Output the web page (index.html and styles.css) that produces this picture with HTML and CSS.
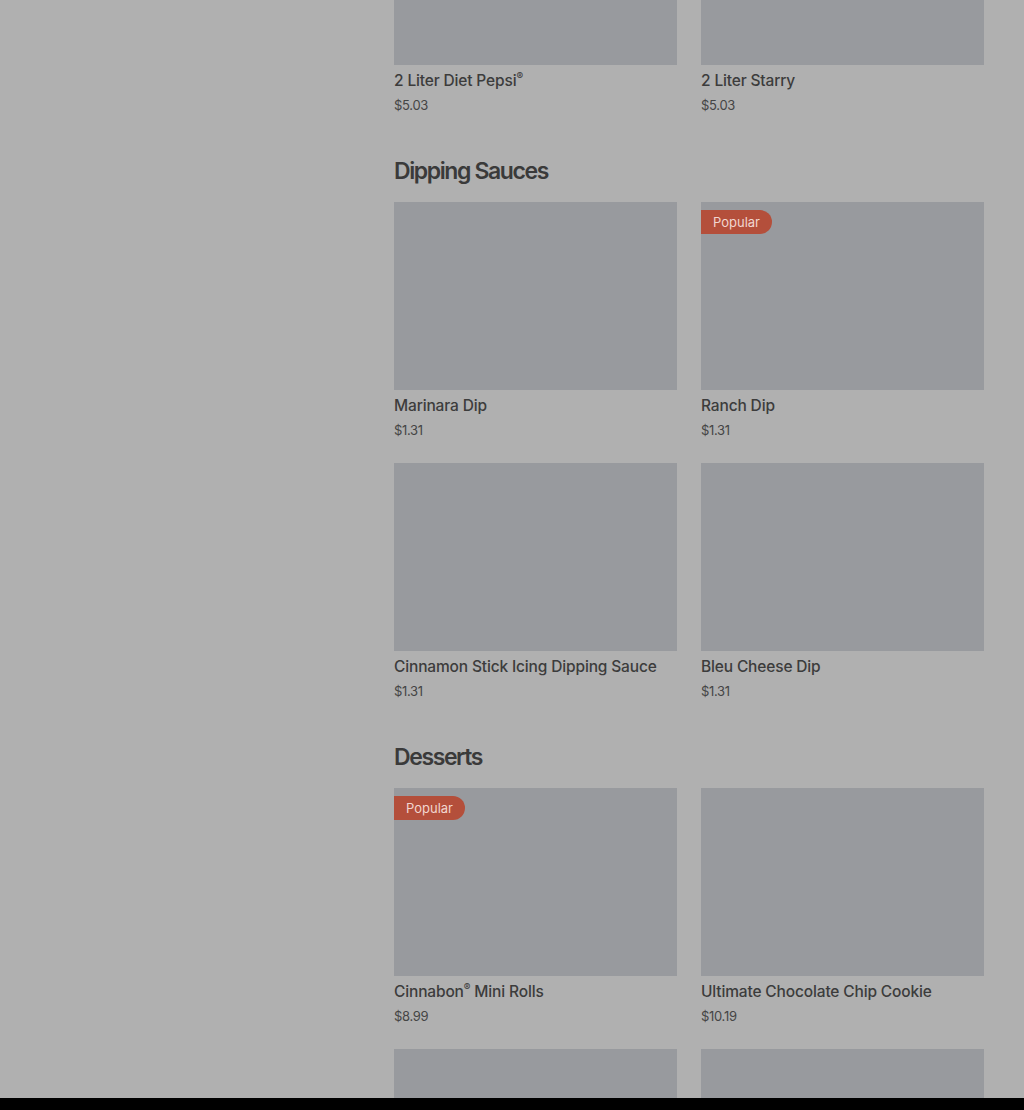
FILE: index.html
```html
<!DOCTYPE html>
<html>
<head>
    <meta charset="UTF-8"/>
    <title>Menu</title>
    <link rel="stylesheet" href="styles.css">
</head>
<body>
<div class="page">
    <div class="menu">
        <div class="grid">
            <div class="card">
                <div class="photo"></div>
                <div class="name">2 Liter Diet Pepsi<sup>®</sup></div>
                <div class="price">$5.03</div>
            </div>
            <div class="card">
                <div class="photo"></div>
                <div class="name">2 Liter Starry</div>
                <div class="price">$5.03</div>
            </div>
        </div>

        <h2 class="title">Dipping Sauces</h2>
        <div class="grid">
            <div class="card">
                <div class="photo"></div>
                <div class="name">Marinara Dip</div>
                <div class="price">$1.31</div>
            </div>
            <div class="card">
                <div class="photo"><span class="badge">Popular</span></div>
                <div class="name">Ranch Dip</div>
                <div class="price">$1.31</div>
            </div>
            <div class="card">
                <div class="photo"></div>
                <div class="name">Cinnamon Stick Icing Dipping Sauce</div>
                <div class="price">$1.31</div>
            </div>
            <div class="card">
                <div class="photo"></div>
                <div class="name">Bleu Cheese Dip</div>
                <div class="price">$1.31</div>
            </div>
        </div>

        <h2 class="title">Desserts</h2>
        <div class="grid">
            <div class="card">
                <div class="photo"><span class="badge">Popular</span></div>
                <div class="name">Cinnabon<sup>®</sup> Mini Rolls</div>
                <div class="price">$8.99</div>
            </div>
            <div class="card">
                <div class="photo"></div>
                <div class="name">Ultimate Chocolate Chip Cookie</div>
                <div class="price">$10.19</div>
            </div>
            <div class="card">
                <div class="photo"></div>
            </div>
            <div class="card">
                <div class="photo"></div>
            </div>
        </div>
    </div>
</div>
<div class="bar"></div>
</body>
</html>
```

FILE: styles.css
```css
*{
    margin: 0;
    padding: 0;
    box-sizing: border-box;
}
body{
    background: #b0b0b0;
    font-family: Inter, "Noto Sans", sans-serif;
    color: #3c3c3c;
    overflow: hidden;
}
.page{
    height: 1098px;
    overflow: hidden;
}
.menu{
    width: 590px;
    margin-left: 394px;
    margin-top: -123px;
}
.grid{
    display: grid;
    grid-template-columns: 283px 283px;
    column-gap: 24px;
    row-gap: 24px;
}
.photo{
    position: relative;
    height: 188px;
    background: #989a9e;
}
.name{
    margin-top: 6px;
    font-size: 15.5px;
    line-height: 20px;
    font-weight: 500;
    letter-spacing: -0.15px;
    white-space: nowrap;
}
.name sup{
    font-size: 10px;
    line-height: 0;
    vertical-align: 6px;
}
.price{
    margin-top: 5px;
    font-size: 13px;
    line-height: 18px;
    letter-spacing: -0.3px;
    color: #454545;
}
.title{
    margin: 41px 0 15px;
    font-size: 23px;
    line-height: 32px;
    font-weight: 600;
    letter-spacing: -1.4px;
    color: #3a3a3a;
}
.badge{
    position: absolute;
    top: 8px;
    left: 0;
    height: 24px;
    padding: 0 12px;
    border-radius: 0 12px 12px 0;
    background: #b44f3b;
    color: #f1d6cf;
    font-size: 13px;
    line-height: 24px;
}
.bar{
    height: 12px;
    background: #000;
}
```
